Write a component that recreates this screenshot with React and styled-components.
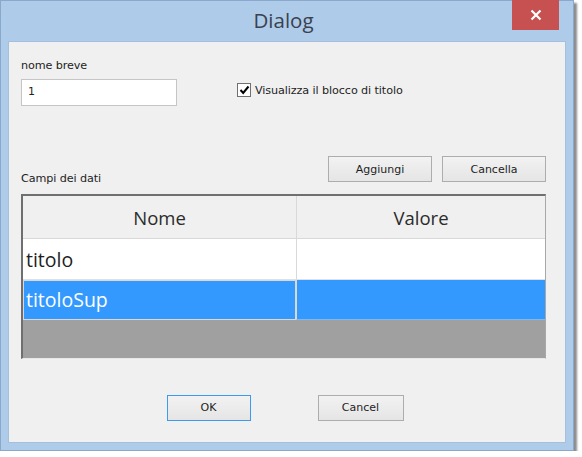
import React from "react";
import styled, { createGlobalStyle } from "styled-components";

const Global = createGlobalStyle`
  html, body { margin: 0; padding: 0; background: #ffffff; }
  body { font-family: "Liberation Sans", Arial, sans-serif; }
`;

const Window = styled.div`
  position: relative;
  box-sizing: border-box;
  width: 574px;
  height: 451px;
  background: #aecbe9;
  border: 1px solid #8aa8cc;
  box-shadow: 3px 3px 2px rgba(0, 0, 0, 0.45);
  display: flex;
  flex-direction: column;
`;

const TitleBar = styled.div`
  height: 40px;
  display: flex;
  align-items: center;
  justify-content: center;
  font-family: "Open Sans", "Noto Sans", sans-serif;
  font-size: 20.5px;
  color: #3a4250;
  padding: 0 7px 2px 0;
  box-sizing: border-box;
`;

const CloseButton = styled.div`
  position: absolute;
  top: -1px;
  right: 14px;
  width: 47px;
  height: 30px;
  background: #c75050;
  display: flex;
  align-items: center;
  justify-content: center;
`;

const Client = styled.div`
  flex: 1;
  margin: 0 7px 7px 7px;
  background: #f0f0f0;
  border: 1px solid #a6bfdc;
  display: flex;
  flex-direction: column;
  padding: 17px 12px 0 12px;
  font-family: "DejaVu Sans", sans-serif;
  font-size: 11px;
  color: #1e1e1e;
`;

const TopRow = styled.div`
  display: flex;
  align-items: flex-start;
`;

const Field = styled.div`
  display: flex;
  flex-direction: column;
  gap: 7px;
`;

const Label = styled.div`
  font-family: "DejaVu Sans", sans-serif;
  font-size: 11.2px;
  color: #1e1e1e;
  letter-spacing: -0.1px;
`;

const TextInput = styled.div`
  box-sizing: border-box;
  width: 156px;
  height: 27px;
  background: #fff;
  border: 1px solid #c5c5c5;
  padding: 5px 6px;
  font-family: "DejaVu Sans", sans-serif;
  font-size: 11px;
`;

const CheckRow = styled.div`
  display: flex;
  align-items: center;
  gap: 4px;
  margin-left: 60px;
  margin-top: 24px;
`;

const CheckBox = styled.div`
  box-sizing: border-box;
  width: 14px;
  height: 14px;
  border: 1px solid #707070;
  background: #fff;
  display: flex;
  align-items: center;
  justify-content: center;
`;

const MidRow = styled.div`
  display: flex;
  align-items: flex-end;
  margin-top: 50px;
`;

const Spacer = styled.div`
  flex: 1;
`;

const Buttons = styled.div`
  display: flex;
  gap: 10px;
  margin-right: 7px;
`;

const Button = styled.div`
  box-sizing: border-box;
  width: ${(p) => p.$w || 104}px;
  height: 26px;
  display: flex;
  align-items: center;
  justify-content: center;
  border: 1px solid ${(p) => (p.$default ? "#3c9bef" : "#adadad")};
  background: linear-gradient(#f2f2f2, #e5e5e5);
  font-family: "DejaVu Sans", sans-serif;
  font-size: 11px;
  color: #1e1e1e;
`;

const SectionLabel = styled(Label)`
  margin-bottom: -3px;
`;

const Table = styled.div`
  box-sizing: border-box;
  margin-top: 12px;
  margin-right: 7px;
  height: 165px;
  border-top: 2px solid #6f6f6f;
  border-left: 2px solid #6f6f6f;
  border-right: 1px solid #a8a8a8;
  border-bottom: 1px solid #e8e8e8;
  background: #a0a0a0;
  display: grid;
  grid-template-columns: 273px 1fr;
  grid-template-rows: 43px 41px 40px;
  font-family: "Open Sans", "Noto Sans", sans-serif;
  font-size: 18.5px;
`;

const HeaderCell = styled.div`
  background: #f0f0f0;
  border-bottom: 1px solid #d9d9d9;
  border-left: ${(p) => (p.$first ? "none" : "1px solid #d9d9d9")};
  display: flex;
  align-items: center;
  justify-content: center;
  color: #2b2b2b;
  padding-top: 1px;
`;

const Cell = styled.div`
  box-sizing: border-box;
  font-size: 19.5px;
  background: ${(p) => (p.$selected ? "#3399ff" : "#ffffff")};
  color: ${(p) => (p.$selected ? "#ffffff" : "#1e1e1e")};
  border-left: ${(p) => (p.$first ? "none" : "1px solid #d9d9d9")};
  border-bottom: 1px solid ${(p) => (p.$selected ? "#7fb8f0" : "#e0e0e0")};
  display: flex;
  align-items: center;
  padding-left: 3px;
  ${(p) => (p.$focus ? "outline: 1px solid #d8d8d8; outline-offset: -1px;" : "")}
`;

const Footer = styled.div`
  flex: 1;
  display: flex;
  justify-content: center;
  align-items: center;
  gap: 67px;
  padding-top: 14px;
  padding-right: 4px;
`;

export default function App() {
  return (
    <>
      <Global />
      <Window>
        <TitleBar>Dialog</TitleBar>
        <CloseButton>
          <svg width="12" height="12" viewBox="0 0 12 12">
            <path d="M1.5 1.5 L10.5 10.5 M10.5 1.5 L1.5 10.5" stroke="#fff" strokeWidth="2.2" />
          </svg>
        </CloseButton>
        <Client>
          <TopRow>
            <Field>
              <Label>nome breve</Label>
              <TextInput>1</TextInput>
            </Field>
            <CheckRow>
              <CheckBox>
                <svg width="11" height="10" viewBox="0 0 11 10">
                  <path d="M1.5 5 L4.2 8 L9.5 1.5" stroke="#000" strokeWidth="2" fill="none" />
                </svg>
              </CheckBox>
              <Label>Visualizza il blocco di titolo</Label>
            </CheckRow>
          </TopRow>
          <MidRow>
            <SectionLabel>Campi dei dati</SectionLabel>
            <Spacer />
            <Buttons>
              <Button>Aggiungi</Button>
              <Button>Cancella</Button>
            </Buttons>
          </MidRow>
          <Table>
            <HeaderCell $first>Nome</HeaderCell>
            <HeaderCell>Valore</HeaderCell>
            <Cell $first>titolo</Cell>
            <Cell />
            <Cell $first $selected $focus>titoloSup</Cell>
            <Cell $selected />
          </Table>
          <Footer>
            <Button $w={84} $default>OK</Button>
            <Button $w={86}>Cancel</Button>
          </Footer>
        </Client>
      </Window>
    </>
  );
}
